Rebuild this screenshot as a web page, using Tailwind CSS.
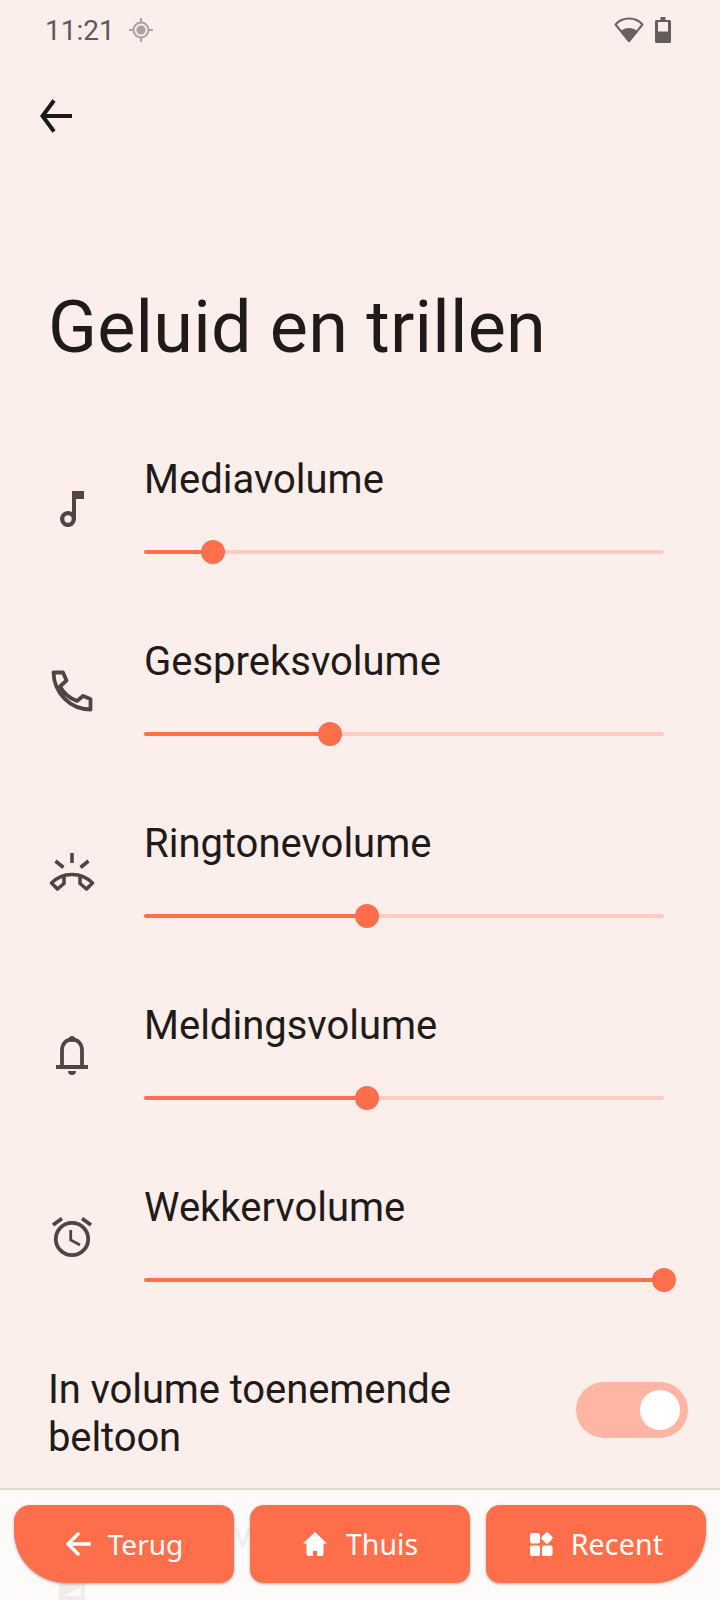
<!DOCTYPE html>
<html>
<head>
<meta charset="utf-8">
<script src="https://cdn.jsdelivr.net/npm/@tailwindcss/browser@4"></script>
</head>
<body class="m-0">
<div class="relative w-[720px] h-[1600px] overflow-hidden bg-[#fceeeb] font-['Roboto',sans-serif] text-[#201a18]">
  <!-- status bar -->
  <div class="h-[60px] pl-[45px] pr-[49px] flex items-center justify-between">
    <div class="flex items-center gap-[14px]">
      <span class="text-[28px] leading-none text-[#5f5a58] pt-[2px]">11:21</span>
      <svg class="w-[24px] h-[24px]" viewBox="0 0 24 24" fill="none"><circle cx="12" cy="12" r="7.500" stroke="#aaa4a1" stroke-width="2"/><circle cx="12" cy="12" r="4.600" fill="#aaa4a1"/><path d="M12 0v4M12 20v4M0 12h4M20 12h4" stroke="#aaa4a1" stroke-width="2.200"/></svg>
    </div>
    <div class="flex items-center gap-[11px]">
      <svg class="w-[30px] h-[26px]" viewBox="0 0 30 26"><path d="M15 24 1.500 7.500C5 3.500 10 1.500 15 1.500s10 2 13.500 6z" fill="none" stroke="#6a6260" stroke-width="2" stroke-linejoin="round"/><path d="M15 25.500 6 14.500C9 12 12 11 15 11s6 1 9 3.500z" fill="#6a6260"/></svg>
      <svg class="w-[16px] h-[26px]" viewBox="0 0 16 26"><path d="M5.500 0h5v3h4a1.500 1.500 0 0 1 1.500 1.500V24.500a1.500 1.500 0 0 1-1.500 1.500h-13A1.500 1.500 0 0 1 0 24.500V4.500A1.500 1.500 0 0 1 1.500 3h4z" fill="#645d5b"/><rect x="3" y="5" width="10" height="9.500" fill="#fceeeb"/></svg>
    </div>
  </div>
  <!-- back -->
  <div class="mt-[24px] h-[64px] pl-[38px] flex items-center">
    <svg class="w-[34px] h-[34px]" viewBox="0 0 34 34" fill="none"><path d="M34 17H5M16 1.500 4.500 17 16 32.500" stroke="#1c1b1a" stroke-width="4"/></svg>
  </div>
  <!-- title -->
  <h1 class="mt-[140px] pl-[48px] text-[72px] tracking-[0.2px] leading-[80px] font-normal">Geluid en trillen</h1>

  <!-- sliders -->
  <div class="mt-[89px] flex flex-col">
    <div class="flex h-[182px]">
      <div class="w-[144px] flex justify-center">
        <svg class="w-[36px] h-[36px] mt-[34px]" viewBox="0 0 36 36" fill="#534341" fill-rule="evenodd"><path d="M18 0h12v8h-8v20a8 8 0 1 1-4-6.930zM14 24.300a3.700 3.700 0 1 0 0 7.400 3.700 3.700 0 0 0 0-7.400z"/></svg>
      </div>
      <div class="flex-1 pr-[56px]">
        <div class="text-[40px] leading-[46px]">Mediavolume</div>
        <div class="relative mt-[47px] h-[4px] rounded-full bg-[#fdccbf]">
          <div class="h-full w-[69px] rounded-full bg-[#ff6f4b]"></div>
          <div class="absolute left-[57px] top-[-10px] w-[24px] h-[24px] rounded-full bg-[#ff6f4b]"></div>
        </div>
      </div>
    </div>
    <div class="flex h-[182px]">
      <div class="w-[144px] flex justify-center">
        <svg class="w-[44px] h-[44px] mt-[29px]" viewBox="0 0 44 44" fill="none" stroke="#534341" stroke-width="3.800" stroke-linejoin="round"><path d="M3.500 4.500h9.500l3.500 8-6.500 6C13 24 19 30 27 33l6-5 7.500 3v10.500C20 41.500 4 25 3.500 4.500z"/></svg>
      </div>
      <div class="flex-1 pr-[56px]">
        <div class="text-[40px] leading-[46px]">Gespreksvolume</div>
        <div class="relative mt-[47px] h-[4px] rounded-full bg-[#fdccbf]">
          <div class="h-full w-[186px] rounded-full bg-[#ff6f4b]"></div>
          <div class="absolute left-[174px] top-[-10px] w-[24px] h-[24px] rounded-full bg-[#ff6f4b]"></div>
        </div>
      </div>
    </div>
    <div class="flex h-[182px]">
      <div class="w-[144px] flex justify-center">
        <svg class="w-[48px] h-[44px] mt-[31px]" viewBox="0 0 48 44" fill="none" stroke="#534341" stroke-width="3.600"><path d="M24 1v10M7.500 9l8 6.500M40.500 9l-8 6.500"/><path d="M16 25V31.500L9.500 37l-6-6C9 25.500 16 22.500 24 22.500S39 25.500 44.500 31l-6 6-6.500-5.500V25" stroke-linejoin="round"/></svg>
      </div>
      <div class="flex-1 pr-[56px]">
        <div class="text-[40px] leading-[46px]">Ringtonevolume</div>
        <div class="relative mt-[47px] h-[4px] rounded-full bg-[#fdccbf]">
          <div class="h-full w-[223px] rounded-full bg-[#ff6f4b]"></div>
          <div class="absolute left-[211px] top-[-10px] w-[24px] h-[24px] rounded-full bg-[#ff6f4b]"></div>
        </div>
      </div>
    </div>
    <div class="flex h-[182px]">
      <div class="w-[144px] flex justify-center">
        <svg class="w-[36px] h-[40px] mt-[33px]" viewBox="0 0 36 40" fill="none"><path d="M18 3.500c-6 0-10 4.500-10 11V31h20V14.500C28 8 24 3.500 18 3.500z" stroke="#534341" stroke-width="3.800"/><path d="M2 31h32" stroke="#534341" stroke-width="4"/><circle cx="18" cy="3" r="3" fill="#534341"/><path d="M14 35h8a4 4 0 0 1-8 0z" fill="#534341"/></svg>
      </div>
      <div class="flex-1 pr-[56px]">
        <div class="text-[40px] leading-[46px]">Meldingsvolume</div>
        <div class="relative mt-[47px] h-[4px] rounded-full bg-[#fdccbf]">
          <div class="h-full w-[223px] rounded-full bg-[#ff6f4b]"></div>
          <div class="absolute left-[211px] top-[-10px] w-[24px] h-[24px] rounded-full bg-[#ff6f4b]"></div>
        </div>
      </div>
    </div>
    <div class="flex h-[182px]">
      <div class="w-[144px] flex justify-center">
        <svg class="w-[44px] h-[44px] mt-[32px]" viewBox="0 0 44 44" fill="none" stroke="#534341"><circle cx="22" cy="22" r="16.200" stroke-width="3.800"/><path d="M3 8 12 1.500M41 8 32 1.500" stroke-width="3.800"/><path d="M20.700 13v10l9.300 5" stroke-width="2.800"/></svg>
      </div>
      <div class="flex-1 pr-[56px]">
        <div class="text-[40px] leading-[46px]">Wekkervolume</div>
        <div class="relative mt-[47px] h-[4px] rounded-full bg-[#fdccbf]">
          <div class="h-full w-full rounded-full bg-[#ff6f4b]"></div>
          <div class="absolute right-[-12px] top-[-10px] w-[24px] h-[24px] rounded-full bg-[#ff6f4b]"></div>
        </div>
      </div>
    </div>
  </div>

  <!-- toggle row -->
  <div class="flex items-center justify-between pl-[48px] pr-[32px] mt-[-7px] h-[100px]">
    <div class="text-[40px] leading-[48px] pt-[8px] tracking-[-0.1px]">In volume toenemende<br>beltoon</div>
    <div class="w-[112px] h-[56px] rounded-full bg-[#ffb5a3] flex items-center justify-end pr-[8px]">
      <div class="w-[40px] h-[40px] rounded-full bg-white"></div>
    </div>
  </div>

  <!-- bottom bar -->
  <div class="absolute left-0 right-0 bottom-0 h-[112px] border-t-[2px] border-[#e3d6d3] bg-[#fdfafa] px-[14px] pt-[15px] flex gap-[16px] font-['Noto_Sans',sans-serif]">
    <svg class="absolute left-[59px] top-[93px] w-[26px] h-[17px]" viewBox="0 0 26 17"><rect width="26" height="17" fill="#efeceb"/><path d="M4 13 22 4v9z" fill="#fdfafa"/></svg>
    <span class="absolute left-[234px] top-[23px] text-[36px] leading-[46px] text-[#f1eeed] font-['Roboto',sans-serif]">vo</span>
    <div class="relative w-[220px] h-[78px] rounded-[14px] rounded-tl-[16px] rounded-bl-[52px] bg-[#ff6f4b] shadow-[0_1px_3px_rgba(0,0,0,0.3)] flex items-center justify-center gap-[17px] text-white text-[28px]">
      <svg class="w-[26px] h-[24px]" viewBox="0 0 26 24" fill="none" stroke="#fff" stroke-width="3.400" stroke-linecap="round" stroke-linejoin="round"><path d="M25 12H3.500M13 2 3 12l10 10"/></svg>
      <span>Terug</span>
    </div>
    <div class="relative w-[220px] h-[78px] rounded-[14px] bg-[#ff6f4b] shadow-[0_1px_3px_rgba(0,0,0,0.3)] flex items-center justify-center gap-[17px] text-white text-[28.500px]">
      <svg class="w-[26px] h-[26px]" viewBox="0 0 26 26" fill="#fff"><path d="M13 1 1 12.500h3.500V23a2 2 0 0 0 2 2H11v-5h4v5h4.500a2 2 0 0 0 2-2V12.500H25z"/></svg>
      <span class="pl-[1px]">Thuis</span>
    </div>
    <div class="relative w-[220px] h-[78px] rounded-[14px] rounded-tr-[16px] rounded-br-[52px] bg-[#ff6f4b] shadow-[0_1px_3px_rgba(0,0,0,0.3)] flex items-center justify-center gap-[18px] text-white text-[28.500px]">
      <svg class="w-[24px] h-[24px]" viewBox="0 0 24 24" fill="#fff"><rect x="1" y="1" width="10" height="10.500" rx="2"/><rect x="1" y="13.500" width="10" height="10.500" rx="2"/><rect x="13" y="13.500" width="10.500" height="10.500" rx="2"/><rect x="13.500" y="1.500" width="9" height="9" rx="2" transform="rotate(45 18 6)"/></svg>
      <span class="tracking-[0.2px]">Recent</span>
    </div>
  </div>
</div>
</body>
</html>
